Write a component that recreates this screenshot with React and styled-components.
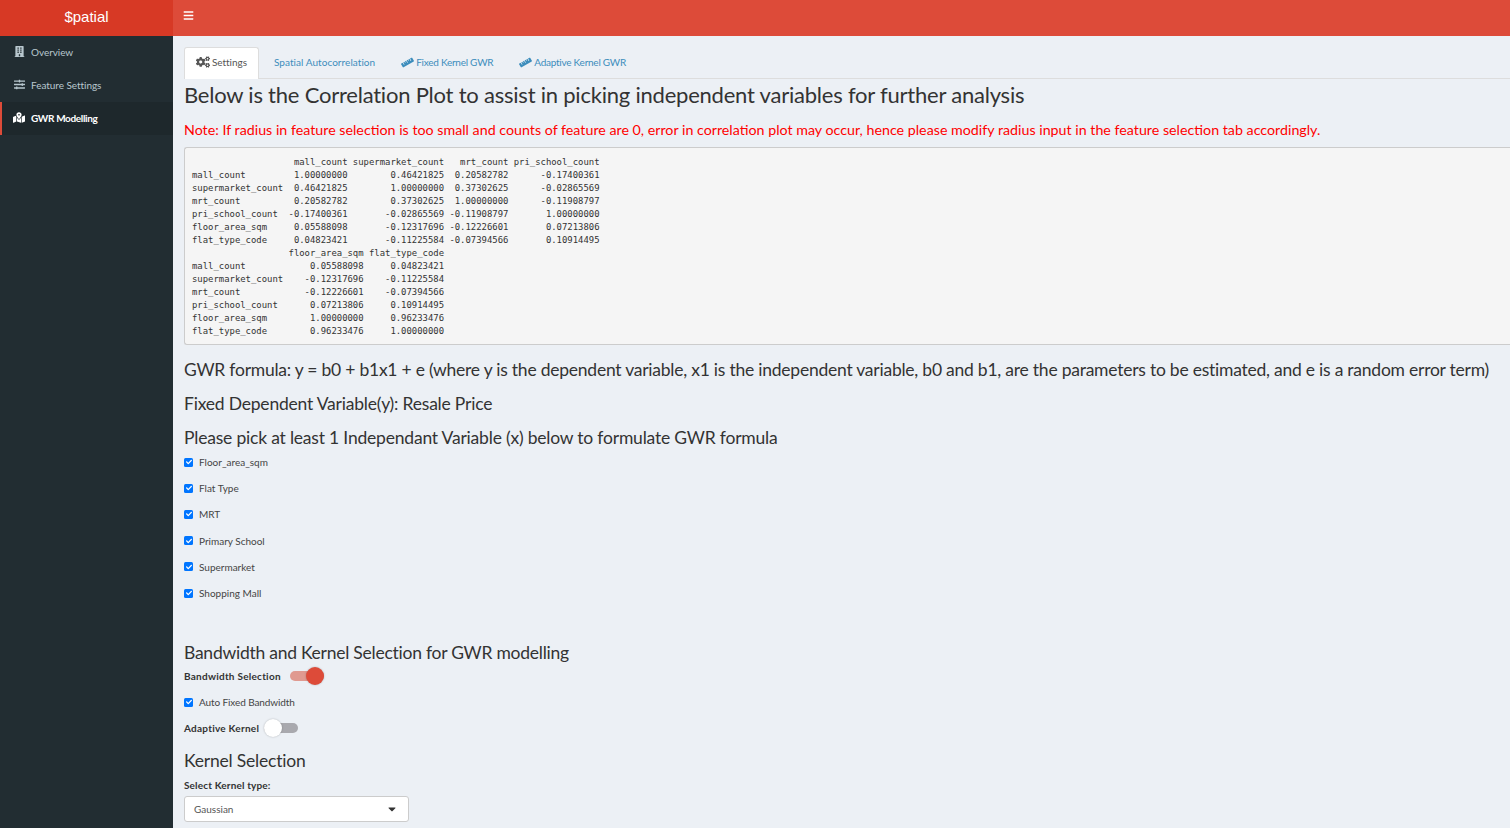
import styled, { createGlobalStyle } from "styled-components";
import { FaBars, FaBuilding, FaSlidersH, FaMapMarkedAlt, FaCogs, FaRuler, FaCheck, FaCaretDown } from "react-icons/fa";

const corrTable = `                   mall_count supermarket_count   mrt_count pri_school_count
mall_count         1.00000000        0.46421825  0.20582782      -0.17400361
supermarket_count  0.46421825        1.00000000  0.37302625      -0.02865569
mrt_count          0.20582782        0.37302625  1.00000000      -0.11908797
pri_school_count  -0.17400361       -0.02865569 -0.11908797       1.00000000
floor_area_sqm     0.05588098       -0.12317696 -0.12226601       0.07213806
flat_type_code     0.04823421       -0.11225584 -0.07394566       0.10914495
                  floor_area_sqm flat_type_code
mall_count            0.05588098     0.04823421
supermarket_count    -0.12317696    -0.11225584
mrt_count            -0.12226601    -0.07394566
pri_school_count      0.07213806     0.10914495
floor_area_sqm        1.00000000     0.96233476
flat_type_code        0.96233476     1.00000000`;

const variables = ["Floor_area_sqm", "Flat Type", "MRT", "Primary School", "Supermarket", "Shopping Mall"];

const menu = [
  { label: "Overview", icon: <FaBuilding /> },
  { label: "Feature Settings", icon: <FaSlidersH /> },
  { label: "GWR Modelling", icon: <FaMapMarkedAlt />, active: true },
];

const tabs = [
  { label: "Settings", icon: <FaCogs />, active: true },
  { label: "Spatial Autocorrelation" },
  { label: "Fixed Kernel GWR", icon: <FaRuler />, tight: true },
  { label: "Adaptive Kernel GWR", icon: <FaRuler />, tight: true },
];

const App = () => {
  return (
    <Page>
      <GlobalStyle />
      <Sidebar>
        <Logo>$patial</Logo>
        {menu.map((item) => (
          <MenuItem key={item.label} $active={item.active}>
            <MenuIcon $active={item.active}>{item.icon}</MenuIcon>
            {item.label}
          </MenuItem>
        ))}
      </Sidebar>
      <Main>
        <TopBar>
          <FaBars />
        </TopBar>
        <Content>
          <TabBar>
            {tabs.map((tab) => (
              <Tab key={tab.label} $active={tab.active} $tight={tab.tight}>
                {tab.icon}
                {tab.label}
              </Tab>
            ))}
          </TabBar>
          <PageTitle>Below is the Correlation Plot to assist in picking independent variables for further analysis</PageTitle>
          <Note>Note: If radius in feature selection is too small and counts of feature are 0, error in correlation plot may occur, hence please modify radius input in the feature selection tab accordingly.</Note>
          <Output>{corrTable}</Output>
          <FirstFormula>GWR formula: y = b0 + b1x1 + e (where y is the dependent variable, x1 is the independent variable, b0 and b1, are the parameters to be estimated, and e is a random error term)</FirstFormula>
          <Formula>Fixed Dependent Variable(y): Resale Price</Formula>
          <Formula>Please pick at least 1 Independant Variable (x) below to formulate GWR formula</Formula>
          <CheckGroup>
            {variables.map((name) => (
              <CheckRow key={name}>
                <CheckBox><FaCheck /></CheckBox>
                {name}
              </CheckRow>
            ))}
          </CheckGroup>
          <SectionTitle>Bandwidth and Kernel Selection for GWR modelling</SectionTitle>
          <SwitchRow>
            <SwitchLabel>Bandwidth Selection</SwitchLabel>
            <Switch $on />
          </SwitchRow>
          <SingleCheck>
            <CheckBox><FaCheck /></CheckBox>
            Auto Fixed Bandwidth
          </SingleCheck>
          <SwitchRow>
            <SwitchLabel>Adaptive Kernel</SwitchLabel>
            <Switch />
          </SwitchRow>
          <KernelTitle>Kernel Selection</KernelTitle>
          <SelectLabel>Select Kernel type:</SelectLabel>
          <Select>
            Gaussian
            <FaCaretDown />
          </Select>
        </Content>
      </Main>
    </Page>
  );
};

export default App;

const font = `"Lato", "Noto Sans", sans-serif`;

const GlobalStyle = createGlobalStyle`
  html, body {
    margin: 0;
    height: 100%;
    overflow: hidden;
  }
  body {
    font-family: ${font};
    color: #333;
  }
`;

const Page = styled.div`
  display: flex;
  width: 1510px;
  height: 828px;
  overflow: hidden;
  background: #ecf0f5;
`;

const Sidebar = styled.aside`
  flex: 0 0 173px;
  background: #222d32;
`;

const Logo = styled.div`
  height: 36px;
  line-height: 34px;
  background: #d73925;
  color: #fff;
  text-align: center;
  font-family: "Liberation Sans", sans-serif;
  font-size: 15px;
`;

const MenuItem = styled.div`
  display: flex;
  align-items: center;
  height: 33px;
  padding-left: ${(p) => (p.$active ? "11px" : "13px")};
  padding-bottom: 2px;
  box-sizing: border-box;
  border-left: ${(p) => (p.$active ? "2px solid #dd4b39" : "0")};
  background: ${(p) => (p.$active ? "#1e282c" : "transparent")};
  color: ${(p) => (p.$active ? "#fff" : "#b8c7ce")};
  font-size: 10px;
  font-weight: ${(p) => (p.$active ? 700 : 400)};
  letter-spacing: ${(p) => (p.$active ? "-0.35px" : "-0.05px")};
`;

const MenuIcon = styled.span`
  display: flex;
  justify-content: center;
  width: 12px;
  margin-right: 6px;
  font-size: ${(p) => (p.$active ? "13px" : "11px")};
`;

const Main = styled.div`
  flex: 1;
  min-width: 0;
`;

const TopBar = styled.header`
  display: flex;
  align-items: center;
  height: 36px;
  padding: 0 0 5px 10px;
  box-sizing: border-box;
  background: #dd4b39;
  color: #fff;
  font-size: 11px;
`;

const Content = styled.main`
  padding: 11px 0 0 11px;
`;

const TabBar = styled.nav`
  display: flex;
  height: 31px;
  border-bottom: 1px solid #ddd;
`;

const Tab = styled.div`
  display: flex;
  align-items: center;
  gap: 2px;
  width: ${(p) => (p.$active ? "75px" : "auto")};
  height: 32px;
  padding: 0 ${(p) => (p.$active ? "11px" : "10px")} 3px;
  margin-right: 4px;
  box-sizing: border-box;
  border: 1px solid ${(p) => (p.$active ? "#ddd" : "transparent")};
  border-bottom: 0;
  border-radius: 3px 3px 0 0;
  background: ${(p) => (p.$active ? "#fff" : "transparent")};
  color: ${(p) => (p.$active ? "#555" : "#3c8dbc")};
  font-size: 10px;
  white-space: nowrap;
  letter-spacing: ${(p) => (p.$tight ? "-0.25px" : p.$active ? "-0.05px" : "0.05px")};

  svg {
    flex: none;
    font-size: ${(p) => (p.$tight ? "13px" : "14px")};
  }
`;

const PageTitle = styled.h2`
  margin: 2px 0 0;
  font-size: 22px;
  line-height: 28px;
  font-weight: 400;
  letter-spacing: -0.22px;
  color: #333;
`;

const Note = styled.p`
  margin: 11px 0 0;
  font-size: 14.25px;
  line-height: 20px;
  color: #f00;
`;

const Output = styled.pre`
  margin: 7px 0 0;
  padding: 8px 8px 8px 7px;
  height: 198px;
  box-sizing: border-box;
  border: 1px solid #ccc;
  border-radius: 3px 0 0 3px;
  border-right: 0;
  background: #f5f5f5;
  color: #333;
  font-family: "DejaVu Sans Mono", monospace;
  font-size: 8.92px;
  line-height: 13px;
`;

const Formula = styled.h4`
  margin: 0;
  padding-top: 11px;
  height: 34px;
  box-sizing: border-box;
  font-size: 17.5px;
  line-height: 28px;
  font-weight: 400;
  letter-spacing: -0.2px;
  white-space: nowrap;
`;

const FirstFormula = styled(Formula)`
  letter-spacing: -0.235px;
`;

const CheckGroup = styled.div`
  display: flex;
  flex-direction: column;
  margin-top: 2px;
`;

const CheckRow = styled.label`
  display: flex;
  align-items: center;
  height: 26.2px;
  font-size: 10px;
  color: #444;
`;

const CheckBox = styled.span`
  display: flex;
  align-items: center;
  justify-content: center;
  width: 9px;
  height: 9px;
  margin-right: 6px;
  border-radius: 1.5px;
  background: #0075ff;
  color: #fff;
  font-size: 6px;
`;

const SectionTitle = styled.h4`
  height: 21px;
  margin: 36px 0 0;
  font-size: 17.5px;
  line-height: 22px;
  font-weight: 400;
  letter-spacing: -0.25px;
`;

const SwitchRow = styled.div`
  display: flex;
  align-items: center;
  gap: 9px;
  height: 26px;
`;

const SwitchLabel = styled.span`
  font-size: 10px;
  font-weight: 700;
  letter-spacing: 0.25px;
`;

const Switch = styled.span`
  position: relative;
  display: inline-block;
  width: 34px;
  height: 10px;
  border-radius: 5px;
  margin-left: ${(p) => (p.$on ? "0" : "-4px")};
  background: ${(p) => (p.$on ? "#e09a90" : "#a9a9ae")};

  &::after {
    content: "";
    position: absolute;
    top: -4px;
    left: ${(p) => (p.$on ? "16px" : "0")};
    width: 18px;
    height: 18px;
    border-radius: 50%;
    background: ${(p) => (p.$on ? "#dd4b39" : "#fff")};
    box-shadow: 0 0 2px rgba(0, 0, 0, 0.25);
  }
`;

const SingleCheck = styled(CheckRow)`
  height: 26px;
  letter-spacing: -0.1px;
`;

const KernelTitle = styled.h4`
  margin: 6px 0 0;
  font-size: 17.5px;
  line-height: 28px;
  font-weight: 400;
  letter-spacing: -0.2px;
`;

const SelectLabel = styled.div`
  margin-top: 2px;
  font-size: 10px;
  line-height: 16px;
  font-weight: 700;
  letter-spacing: 0.15px;
`;

const Select = styled.div`
  display: flex;
  align-items: center;
  justify-content: space-between;
  width: 225px;
  height: 26px;
  margin-top: 3px;
  padding: 0 10px 0 9px;
  box-sizing: border-box;
  border: 1px solid #ccc;
  border-radius: 3px;
  background: #fff;
  font-size: 10px;
  color: #555;

  svg {
    color: #333;
    font-size: 12px;
  }
`;
